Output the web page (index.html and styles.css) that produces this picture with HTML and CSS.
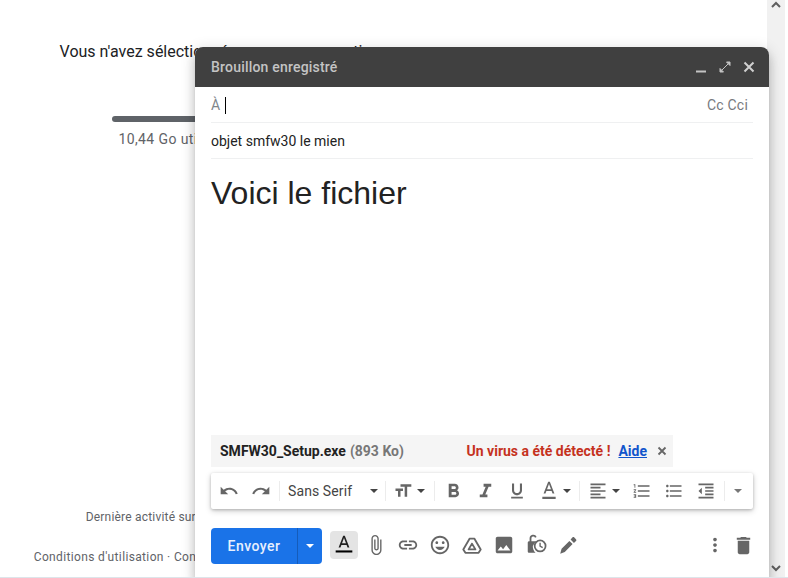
FILE: index.html
```html
<!DOCTYPE html>
<html lang="fr">
<head>
<meta charset="utf-8">
<title>Gmail</title>
<link rel="stylesheet" href="styles.css">
</head>
<body>
<div class="page">
  <main class="pane">
    <div class="pane-col">
      <p class="empty">Vous n'avez sélectionné aucune conversation</p>
      <div class="storage-bar"></div>
      <p class="storage-text">10,44 Go utilisés sur 15 Go</p>
      <div class="grow"></div>
      <p class="activity">Dernière activité sur le compte : il y a 2 minutes</p>
      <p class="terms">Conditions d'utilisation · Confidentialité · Règlement du programme</p>
    </div>
  </main>
  <div class="scrollbar">
    <svg class="sb-arrow" width="18" height="16" viewBox="0 0 18 16"><path d="M5 7l4-4 4 4" fill="none" stroke="#5f5f5f" stroke-width="2"/></svg>
    <svg class="sb-arrow" width="18" height="16" viewBox="0 0 18 16"><path d="M5 5l4 4 4-4" fill="none" stroke="#5f5f5f" stroke-width="2"/></svg>
  </div>

  <section class="compose">
    <header class="c-head">
      <span class="c-title">Brouillon enregistré</span>
      <div class="c-ctrls">
        <svg width="16" height="16" viewBox="0 0 16 16"><path d="M3 12.500h10" stroke="#c4c4c4" stroke-width="2"/></svg>
        <svg width="16" height="16" viewBox="0 0 16 16"><path d="M9.500 3H13v3.500zM6.500 13H3V9.500zM11 5L5 11" fill="#c4c4c4" stroke="#c4c4c4" stroke-width="1"/></svg>
        <svg width="16" height="16" viewBox="0 0 16 16"><path d="M3.500 3.500l9 9M12.500 3.500l-9 9" stroke="#d0d0d0" stroke-width="2"/></svg>
      </div>
    </header>
    <div class="c-inner">
      <div class="row-to">
        <span class="to-label">À</span><span class="caret"></span>
        <span class="cc">Cc Cci</span>
      </div>
      <div class="row-subject">objet smfw30 le mien</div>
      <div class="c-body">Voici le fichier</div>
      <div class="attachment">
        <span class="att-name">SMFW30_Setup.exe</span>
        <span class="att-size">(893 Ko)</span>
        <span class="att-virus">Un virus a été détecté !</span>
        <a class="att-help" href="#">Aide</a>
        <svg class="att-x" width="12" height="12" viewBox="0 0 12 12"><path d="M2.500 2.500l7 7M9.500 2.500l-7 7" stroke="#666" stroke-width="1.800"/></svg>
      </div>
      <div class="toolbar">
        <span class="tb tb-32"><svg viewBox="0 0 24 24"><path d="M12.500 8c-2.650 0-5.050.99-6.900 2.600L2 7v9h9l-3.620-3.620c1.390-1.160 3.160-1.880 5.120-1.880 3.540 0 6.550 2.310 7.600 5.500l2.370-.78C21.080 11.030 17.150 8 12.500 8z"/></svg></span>
        <span class="tb tb-32"><svg viewBox="0 0 24 24"><path d="M18.400 10.600C16.550 8.990 14.150 8 11.500 8c-4.650 0-8.580 3.030-9.960 7.220L3.900 16c1.050-3.190 4.050-5.500 7.600-5.500 1.950 0 3.730.72 5.120 1.880L13 16h9V7l-3.600 3.600z"/></svg></span>
        <span class="sep"></span>
        <span class="font-sel">Sans Serif<i class="caret-d"></i></span>
        <span class="sep"></span>
        <span class="tb tb-w tb-size"><svg viewBox="0 0 24 24"><path d="M9 4v3h5v12h3V7h5V4H9zm-6 8h3v7h3v-7h3V9H3v3z"/></svg><i class="caret-d"></i></span>
        <span class="sep"></span>
        <span class="tb tb-32"><svg class="big" viewBox="0 0 24 24"><path d="M15.600 10.790c.97-.67 1.650-1.770 1.650-2.790 0-2.260-1.750-4-4-4H7v14h7.040c2.090 0 3.710-1.700 3.710-3.790 0-1.520-.86-2.820-2.150-3.420zM10 6.500h3c.83 0 1.500.67 1.500 1.500s-.67 1.500-1.500 1.500h-3v-3zm3.500 9H10v-3h3.500c.83 0 1.500.67 1.500 1.500s-.67 1.500-1.500 1.500z"/></svg></span>
        <span class="tb tb-32"><svg class="big" viewBox="0 0 24 24"><path d="M10 4v3h2.210l-3.420 8H6v3h8v-3h-2.210l3.420-8H18V4z"/></svg></span>
        <span class="tb tb-32"><svg viewBox="0 0 24 24"><path d="M12 17c3.310 0 6-2.690 6-6V3h-2.500v8c0 1.930-1.570 3.500-3.500 3.500S8.500 12.930 8.500 11V3H6v8c0 3.310 2.690 6 6 6zm-7 2v2h14v-2H5z"/></svg></span>
        <span class="tb tb-w"><svg viewBox="0 0 24 24"><path d="M11 1L5.500 15h2.250l1.120-3h6.250l1.120 3h2.250L13 1h-2zm-1.380 9L12 3.670 14.380 10H9.620zM4 19h16v2.500H4z"/></svg><i class="caret-d"></i></span>
        <span class="sep"></span>
        <span class="tb tb-w"><svg viewBox="0 0 24 24"><path d="M15 15H3v2h12v-2zm0-8H3v2h12V7zM3 13h18v-2H3v2zm0 8h18v-2H3v2zM3 3v2h18V3H3z"/></svg><i class="caret-d"></i></span>
        <span class="tb tb-32"><svg viewBox="0 0 24 24"><path d="M2 17h2v.5H3v1h1v.5H2v1h3v-4H2v1zm1-9h1V4H2v1h1v3zm-1 3h1.800L2 13.100v.9h3v-1H3.200L5 10.900V10H2v1zm5-6v2h14V5H7zm0 14h14v-2H7v2zm0-6h14v-2H7v2z"/></svg></span>
        <span class="tb tb-32"><svg viewBox="0 0 24 24"><path d="M4 10.500c-.83 0-1.500.67-1.500 1.500s.67 1.500 1.500 1.500 1.500-.67 1.500-1.500-.67-1.500-1.500-1.500zm0-6c-.83 0-1.500.67-1.500 1.500S3.170 7.500 4 7.500 5.500 6.830 5.500 6 4.830 4.500 4 4.500zm0 12c-.83 0-1.500.68-1.500 1.500s.68 1.500 1.500 1.500 1.500-.68 1.500-1.500-.67-1.500-1.500-1.500zM7 19h14v-2H7v2zm0-6h14v-2H7v2zm0-8v2h14V5H7z"/></svg></span>
        <span class="tb tb-32"><svg viewBox="0 0 24 24"><path d="M11 17h10v-2H11v2zm-8-5l4 4V8l-4 4zm0 9h18v-2H3v2zM3 3v2h18V3H3zm8 6h10V7H11v2zm0 4h10v-2H11v2z"/></svg></span>
        <span class="sep"></span>
        <span class="tb tb-more"><i class="caret-d caret-light"></i></span>
      </div>
      <div class="actions">
        <div class="send">
          <span class="send-main">Envoyer</span>
          <span class="send-more"><i class="caret-w"></i></span>
        </div>
        <span class="fmt-btn"><svg viewBox="0 0 24 24"><path d="M11 1L5.500 15h2.250l1.120-3h6.250l1.120 3h2.250L13 1h-2zm-1.380 9L12 3.670 14.380 10H9.620z" fill="#222"/><path d="M2 18.500h20v2.500H2z" fill="#000"/></svg></span>
        <span class="ic"><svg viewBox="0 0 24 24"><path d="M16.500 6v11.500c0 2.210-1.790 4-4 4s-4-1.790-4-4V5c0-1.380 1.120-2.500 2.500-2.500s2.500 1.120 2.500 2.500v10.500c0 .55-.45 1-1 1s-1-.45-1-1V6H10v9.500c0 1.380 1.120 2.500 2.500 2.500s2.500-1.120 2.500-2.500V5c0-2.210-1.790-4-4-4S7 2.790 7 5v12.500c0 3.040 2.460 5.500 5.500 5.500s5.500-2.460 5.500-5.500V6h-1.500z"/></svg></span>
        <span class="ic"><svg viewBox="0 0 24 24"><path d="M3.900 12c0-1.710 1.390-3.100 3.100-3.100h4V7H7c-2.760 0-5 2.240-5 5s2.240 5 5 5h4v-1.900H7c-1.710 0-3.100-1.390-3.100-3.100zM8 13h8v-2H8v2zm9-6h-4v1.900h4c1.710 0 3.100 1.390 3.100 3.100s-1.390 3.100-3.100 3.100h-4V17h4c2.760 0 5-2.240 5-5s-2.240-5-5-5z"/></svg></span>
        <span class="ic"><svg viewBox="0 0 24 24"><path d="M11.990 2C6.470 2 2 6.480 2 12s4.470 10 9.990 10C17.520 22 22 17.520 22 12S17.520 2 11.990 2zM12 20c-4.420 0-8-3.580-8-8s3.580-8 8-8 8 3.580 8 8-3.580 8-8 8zm3.500-9c.83 0 1.500-.67 1.500-1.500S16.330 8 15.500 8 14 8.670 14 9.500s.67 1.500 1.500 1.500zm-7 0c.83 0 1.500-.67 1.500-1.500S9.330 8 8.500 8 7 8.670 7 9.500 7.670 11 8.500 11zm3.500 6.500c2.330 0 4.310-1.460 5.110-3.500H6.890c.8 2.040 2.780 3.500 5.110 3.500z"/></svg></span>
        <span class="ic"><svg viewBox="0 0 24 24"><path d="M9.500 5h5l7 12-2.300 3.500H4.800L2.500 17zM12 10.500L8.300 16.800h7.400z" fill="none" stroke="#666" stroke-width="2" stroke-linejoin="round"/></svg></span>
        <span class="ic"><svg viewBox="0 0 24 24"><path d="M21 19V5c0-1.100-.9-2-2-2H5c-1.100 0-2 .9-2 2v14c0 1.100.9 2 2 2h14c1.100 0 2-.9 2-2zM8.500 13.500l2.500 3.010L14.500 12l4.500 6H5l3.500-4.500z"/></svg></span>
        <span class="ic"><svg viewBox="0 0 24 24"><path d="M3 19V9.500C3 8.700 3.700 8 4.500 8H5V4.800a4 4 0 0 1 7.700-1.500l-1.800.8A2 2 0 0 0 7 4.800V8h6.800A8 8 0 0 0 8.500 13c0 3 1 5.500 3 7.500H4.500C3.700 20.500 3 19.800 3 19z"/><path fill-rule="evenodd" d="M16.500 6.100a6.900 6.900 0 1 0 0 13.800 6.900 6.900 0 0 0 0-13.800zm0 1.900a5 5 0 1 1 0 10 5 5 0 0 1 0-10zM15.700 9.500h1.500v3.300l2.500 1.500-.8 1.200-3.200-2z"/></svg></span>
        <span class="ic"><svg viewBox="0 0 24 24"><path d="M3.500 21.500L5 16l8.500-8.500 3.500 3.500L8.500 19.500zM14.800 6l2-2.200c.6-.6 1.500-.6 2.100 0l1.800 1.800c.6.6.6 1.500 0 2.100l-2.200 2z"/></svg></span>
        <div class="grow"></div>
        <span class="ic ic-dots"><svg viewBox="0 0 24 24"><path d="M12 8c1.100 0 2-.9 2-2s-.9-2-2-2-2 .9-2 2 .9 2 2 2zm0 2c-1.100 0-2 .9-2 2s.9 2 2 2 2-.9 2-2-.9-2-2-2zm0 6c-1.100 0-2 .9-2 2s.9 2 2 2 2-.9 2-2-.9-2-2-2z"/></svg></span>
        <span class="ic ic-trash"><svg viewBox="0 0 24 24"><path d="M6 19c0 1.100.9 2 2 2h8c1.100 0 2-.9 2-2V7H6v12zM19 4h-3.500l-1-1h-5l-1 1H5v2h14V4z"/></svg></span>
      </div>
    </div>
  </section>
</div>
</body>
</html>
```

FILE: styles.css
```css
* { box-sizing: border-box; }
html, body { margin: 0; height: 100%; overflow: hidden; background: #fff; }
body { font-family: Roboto, "Liberation Sans", sans-serif; color: #202124; border-bottom: 1px solid #dde5ea; }
p { margin: 0; }
.page { position: relative; display: flex; height: 577px; width: 788px; }
.pane { width: 767px; }
.pane-col { width: 438px; height: 100%; display: flex; flex-direction: column; align-items: center; padding: 42px 0 12px; text-align: center; }
.empty { font-size: 16px; line-height: 20px; white-space: nowrap; padding-left: 2px; }
.storage-bar { width: 214px; height: 6px; margin-top: 54px; border-radius: 3px; background: #5f6368; }
.storage-text { font-size: 14px; line-height: 18px; margin-top: 8px; color: #5f6368; white-space: nowrap; letter-spacing: .4px; padding-right: 24px; }
.grow { flex: 1; }
.activity { font-size: 12px; line-height: 16px; color: #5f6368; white-space: nowrap; letter-spacing: .2px; padding-right: 6px; }
.terms { font-size: 12px; line-height: 16px; margin-top: 24px; color: #5f6368; white-space: nowrap; letter-spacing: .35px; padding-left: 9px; }
.scrollbar { width: 18px; height: 100%; background: #f1f1f1; display: flex; flex-direction: column; justify-content: space-between; }
.sb-arrow { display: block; }

.compose { position: absolute; left: 195px; top: 47px; width: 574px; height: 531px; background: #fff; border-radius: 8px 8px 0 0; box-shadow: 0 8px 10px 1px rgba(0,0,0,.14), 0 3px 14px 2px rgba(0,0,0,.12), 0 5px 5px -3px rgba(0,0,0,.2); display: flex; flex-direction: column; }
.c-head { height: 40px; flex: none; background: #404040; border-radius: 8px 8px 0 0; padding: 0 12px 0 16px; display: flex; align-items: center; justify-content: space-between; }
.c-title { font-size: 14px; font-weight: 500; color: #c4c4c4; letter-spacing: .2px; }
.c-ctrls { display: flex; gap: 8px; }
.c-ctrls svg { display: block; }
.c-inner { flex: 1; min-height: 0; padding: 0 16px 14px; display: flex; flex-direction: column; }
.row-to { height: 36px; flex: none; display: flex; align-items: center; border-bottom: 1px solid #eff0f1; font-size: 14px; padding-top: 1px; }
.to-label { color: #80868b; }
.caret { width: 1px; height: 17px; background: #000; margin-left: 5px; }
.cc { margin-left: auto; margin-right: 5px; color: #5f6368; opacity: .85; letter-spacing: .2px; }
.row-subject { height: 36px; flex: none; display: flex; align-items: center; border-bottom: 1px solid #eff0f1; font-size: 14px; color: #222; }
.c-body { flex: 1; font-family: "Liberation Sans", Arial, sans-serif; font-size: 32px; line-height: 37px; padding-top: 16px; color: #222; }
.attachment { flex: none; width: 462px; height: 32px; background: #f5f5f5; display: flex; align-items: center; padding: 0 5px 0 9px; font-size: 14px; font-weight: 700; white-space: nowrap; }
.att-name { color: #222; }
.att-size { color: #777; margin-left: 4px; }
.att-virus { color: #c5321e; margin-left: auto; }
.att-help { color: #15c; margin-left: 8px; }
.att-x { margin-left: 9px; flex: none; }
.toolbar { flex: none; height: 36px; margin-top: 6px; background: #fff; border-radius: 2px; box-shadow: 0 1px 3px rgba(0,0,0,.2), 0 2px 6px rgba(0,0,0,.18); display: flex; align-items: center; padding-left: 2px; }
.tb { display: flex; align-items: center; height: 36px; flex: none; }
.tb-32 { width: 32px; justify-content: center; }
.tb svg { width: 20px; height: 20px; fill: #666; display: block; flex: none; }
.tb svg.big { width: 23px; height: 23px; }
.tb-w { width: 44px; padding-left: 6px; }
.tb-w .caret-d { margin-left: 3.5px; }
.tb-size { padding-left: 5px; }
.tb-more { width: 22px; justify-content: center; }
.sep { width: 1px; height: 20px; background: #ececec; flex: none; margin: 0 2px; }
.font-sel { width: 101px; flex: none; display: flex; align-items: center; justify-content: space-between; padding: 0 5.5px 0 6px; font-size: 14px; color: #444; letter-spacing: .1px; }
.caret-d { display: block; width: 0; height: 0; border-left: 4.5px solid transparent; border-right: 4.5px solid transparent; border-top: 4px solid #444; }
.caret-light { border-top-color: #777; }
.actions { flex: none; height: 36px; margin-top: 19px; display: flex; align-items: center; }
.send { width: 111px; height: 36px; display: flex; border-radius: 4px; background: #1a73e8; color: #e8f0fe; font-size: 14px; font-weight: 500; letter-spacing: .45px; overflow: hidden; flex: none; }
.send-main { width: 87px; display: flex; align-items: center; justify-content: center; border-right: 1px solid #155cba; }
.send-more { flex: 1; display: flex; align-items: center; justify-content: center; }
.caret-w { display: block; width: 0; height: 0; border-left: 4.5px solid transparent; border-right: 4.5px solid transparent; border-top: 4px solid #fff; }
.fmt-btn { width: 28px; height: 28px; margin: 0 0 2px 8px; background: #e4e4e4; border-radius: 4px; display: flex; align-items: center; justify-content: center; flex: none; }
.fmt-btn svg { width: 20px; height: 20px; display: block; }
.ic { width: 32px; height: 32px; margin-bottom: 2px; display: flex; align-items: center; justify-content: center; flex: none; }
.ic svg { width: 22px; height: 22px; fill: #666; display: block; }
.fmt-btn + .ic { margin-left: 2px; }
.ic-dots { width: 28px; }
.ic-trash { width: 28px; margin-right: -4px; }
.ic-trash svg { width: 23px; height: 23px; }
```
